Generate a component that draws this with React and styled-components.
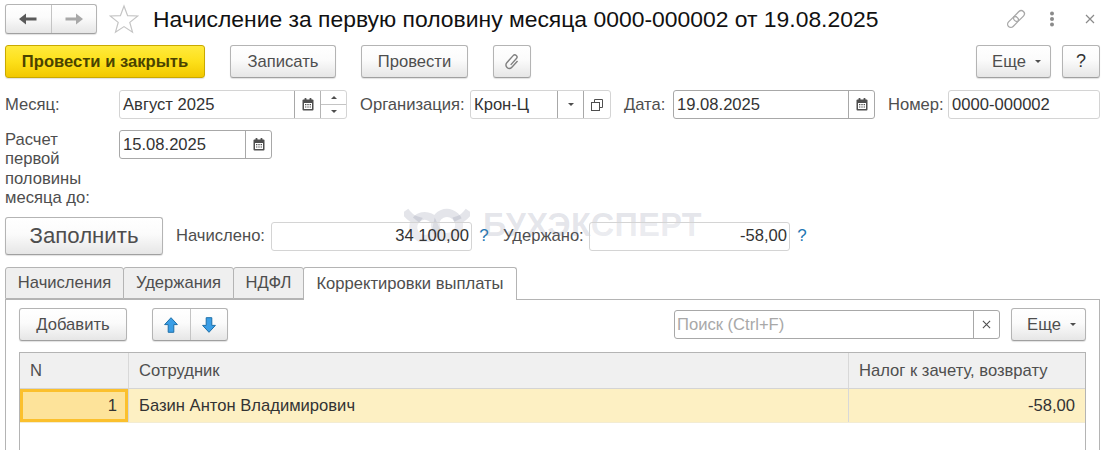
import styled, { createGlobalStyle } from 'styled-components';

const Global = createGlobalStyle`
  html, body { margin: 0; padding: 0; background: #fff; overflow: hidden; }
  body { font-family: "Liberation Sans", Arial, sans-serif; font-size: 16.6px; color: #4e4e4e; }
`;

const Page = styled.div`
  position: relative;
  width: 1109px;
  height: 450px;
  overflow: hidden;
  padding: 4px 9px 0 5px;
  box-sizing: border-box;
`;

const Row = styled.div`
  display: flex;
  align-items: ${({ $align }) => $align || 'center'};
  height: ${({ $h }) => $h}px;
  margin-top: ${({ $mt }) => $mt || 0}px;
`;

const HeadRow = styled(Row)`
  margin-right: -2px;
`;

const Spacer = styled.div`
  flex: 1;
`;

const Btn = styled.button`
  box-sizing: border-box;
  display: flex;
  align-items: center;
  justify-content: center;
  width: ${({ $w }) => $w}px;
  height: ${({ $h }) => $h || 33}px;
  margin-left: ${({ $ml }) => $ml || 0}px;
  padding: 0;
  border: 1px solid #b4b4b4;
  border-bottom-color: #a0a0a0;
  border-radius: 3px;
  background: linear-gradient(#ffffff 0%, #fbfbfb 45%, #e6e6e6 100%);
  box-shadow: 0 1px 1px rgba(0, 0, 0, 0.12);
  font-family: inherit;
  font-size: ${({ $fs }) => $fs || 16.6}px;
  color: #4e4e4e;
`;

const YellowBtn = styled(Btn)`
  border-color: #c9a900;
  background: linear-gradient(#ffea3d 0%, #fde01a 50%, #f2c800 100%);
  font-weight: 700;
  color: #4a4300;
`;

const MoreBtn = styled(Btn)`
  padding-left: 6px;
`;

const HelpBtn = styled(Btn)`
  font-size: 18px;
  color: #333;
`;

const Split = styled.div`
  box-sizing: border-box;
  display: flex;
  width: ${({ $w }) => $w}px;
  height: ${({ $h }) => $h}px;
  margin-left: ${({ $ml }) => $ml || 0}px;
  border: 1px solid #b4b4b4;
  border-bottom-color: #a0a0a0;
  border-radius: 3px;
  background: linear-gradient(#ffffff 0%, #fbfbfb 45%, #e6e6e6 100%);
  box-shadow: 0 1px 1px rgba(0, 0, 0, 0.12);
`;

const SplitCell = styled.div`
  flex: 1;
  display: flex;
  align-items: center;
  justify-content: center;
  & + & { border-left: 1px solid #c4c4c4; }
`;

const Caret = styled.span`
  display: inline-block;
  width: 0;
  height: 0;
  margin-left: ${({ $ml }) => $ml ?? 9}px;
  border-left: 3px solid transparent;
  border-right: 3px solid transparent;
  border-${({ $up }) => ($up ? 'bottom' : 'top')}: 3px solid #4e4e4e;
`;

const Title = styled.h1`
  margin: 0 0 0 13px;
  font-size: 22.9px;
  font-weight: 400;
  color: #111;
  white-space: nowrap;
`;

const HeadIcon = styled.div`
  display: flex;
  align-items: center;
  justify-content: center;
  width: ${({ $w }) => $w || 24}px;
  margin-left: ${({ $ml }) => $ml || 0}px;
`;

const Label = styled.label`
  width: ${({ $w }) => $w}px;
  margin-left: ${({ $ml }) => $ml || 0}px;
  flex-shrink: 0;
  white-space: nowrap;
  color: #4e4e4e;
`;

const Field = styled.div`
  box-sizing: border-box;
  display: flex;
  align-items: stretch;
  width: ${({ $w }) => $w}px;
  height: 29px;
  margin-left: ${({ $ml }) => $ml || 0}px;
  flex-shrink: 0;
  border: 1px solid ${({ $dark }) => ($dark ? '#a8a8a8' : '#d4d4d4')};
  border-radius: 3px;
  background: #fff;
  color: #333;
`;

/* lies over the watermark, which still shows through */
const ClearField = styled(Field)`
  position: relative;
  z-index: 2;
  background: rgba(255, 255, 255, 0.25);
`;

const FieldText = styled.div`
  flex: 1;
  min-width: 0;
  display: flex;
  align-items: center;
  justify-content: ${({ $right }) => ($right ? 'flex-end' : 'flex-start')};
  padding: ${({ $right }) => ($right ? '0 2px 0 0' : '0 0 0 3px')};
  white-space: nowrap;
`;

const Placeholder = styled(FieldText)`
  padding-left: 2px;
  color: #a8a8a8;
`;

const FieldBtn = styled.div`
  box-sizing: border-box;
  display: flex;
  align-items: center;
  justify-content: center;
  width: ${({ $w }) => $w || 26}px;
  border-left: 1px solid #a8a8a8;
`;

const Spin = styled.div`
  box-sizing: border-box;
  display: flex;
  flex-direction: column;
  width: 26px;
  border-left: 1px solid #b4b4b4;
`;

const SpinHalf = styled.div`
  flex: 1;
  display: flex;
  align-items: center;
  justify-content: center;
  & + & { border-top: 1px solid #c4c4c4; }
`;

const MultiLabel = styled.div`
  width: 114px;
  flex-shrink: 0;
  line-height: 19.4px;
  color: #4e4e4e;
`;

const Hint = styled.span`
  width: ${({ $w }) => $w}px;
  text-align: center;
  flex-shrink: 0;
  color: #1f78b4;
  font-size: 17px;
`;

const Tabs = styled.div`
  display: flex;
  height: 33px;
  margin-top: 12px;
`;

const Tab = styled.div`
  box-sizing: border-box;
  display: flex;
  align-items: center;
  justify-content: center;
  width: ${({ $w }) => $w}px;
  height: ${({ $active }) => ($active ? 33 : 32)}px;
  margin-left: ${({ $first }) => ($first ? 0 : -1)}px;
  border: 1px solid #b4b4b4;
  border-bottom: ${({ $active }) => ($active ? 'none' : '1px solid #b4b4b4')};
  border-radius: 3px 3px 0 0;
  background: ${({ $active }) => ($active ? '#fff' : '#efefef')};
  color: #4e4e4e;
  position: relative;
  z-index: ${({ $active }) => ($active ? 1 : 0)};
`;

const Panel = styled.div`
  box-sizing: border-box;
  height: 160px;
  margin-top: -1px;
  width: 1095px;
  padding: 8px 13px 0 13px;
  border: 1px solid #b4b4b4;
  border-bottom: none;
`;

const Table = styled.div`
  box-sizing: border-box;
  width: 1067px;
  height: 110px;
  margin-top: 11px;
  border: 1px solid #b4b4b4;
  border-bottom: none;
`;

const GridRow = styled.div`
  display: grid;
  grid-template-columns: 108px 720px 1fr;
  height: ${({ $h }) => $h}px;
  background: ${({ $current }) => ($current ? '#fdf0c3' : '#f0f0f0')};
  border-bottom: 1px solid ${({ $current }) => ($current ? '#f3ecd2' : '#d4d4d4')};
  color: ${({ $current }) => ($current ? '#333' : '#4e4e4e')};
`;

const Cell = styled.div`
  box-sizing: border-box;
  display: flex;
  align-items: center;
  justify-content: ${({ $right }) => ($right ? 'flex-end' : 'flex-start')};
  padding: ${({ $right }) => ($right ? '0 10px 0 0' : '0 0 0 10px')};
  border-left: ${({ $first }) => ($first ? 'none' : '1px solid #d8d8d8')};
  white-space: nowrap;
`;

const ActiveCell = styled(Cell)`
  padding-right: 8px;
  border: 3px solid #fbc02d;
  background: #fde39a;
`;

const Watermark = styled.div`
  position: absolute;
  left: 404px;
  top: 206px;
  z-index: 1;
  display: flex;
  align-items: center;
  height: 38px;
  pointer-events: none;
  color: rgba(120, 124, 150, 0.2);
`;

const WatermarkText = styled.span`
  margin-left: 13px;
  font-size: 32.4px;
  font-weight: 700;
  letter-spacing: 0.4px;
`;

const ArrowLeft = ({ color }) => (
  <svg width="18" height="12" viewBox="0 0 18 12"><path d="M0 6 L7 0.5 V4.5 H17.5 V7.5 H7 V11.5 Z" fill={color} /></svg>
);
const ArrowRight = ({ color }) => (
  <svg width="18" height="12" viewBox="0 0 18 12"><path d="M18 6 L11 0.5 V4.5 H0.5 V7.5 H11 V11.5 Z" fill={color} /></svg>
);
const Star = () => (
  <svg width="30" height="30" viewBox="0 0 30 30"><path d="M15 2 L18.6 11.6 L28.8 12 L20.8 18.4 L23.5 28.2 L15 22.6 L6.5 28.2 L9.2 18.4 L1.2 12 L11.4 11.6 Z" fill="#fff" stroke="#c4c4c4" strokeWidth="1.2" /></svg>
);
const LinkIcon = () => (
  <svg width="22" height="22" viewBox="0 0 22 22" fill="none" stroke="#a8a8a8" strokeWidth="1.3">
    <g transform="rotate(-45 11 11)">
      <rect x="0.5" y="7.8" width="12.5" height="6.4" rx="3.2" />
      <rect x="9" y="7.8" width="12.5" height="6.4" rx="3.2" />
    </g>
  </svg>
);
const Dots = () => (
  <svg width="6" height="16" viewBox="0 0 6 16" fill="#8a8a8a"><circle cx="3" cy="2.5" r="2" /><circle cx="3" cy="8" r="2" /><circle cx="3" cy="13.5" r="2" /></svg>
);
const Cross = ({ size = 10, color = '#8a8a8a' }) => (
  <svg width={size} height={size} viewBox="0 0 10 10" stroke={color} strokeWidth="1.2"><path d="M1 1 L9 9 M9 1 L1 9" /></svg>
);
const Clip = () => (
  <svg width="20" height="20" viewBox="0 0 20 20" fill="none" stroke="#808080" strokeWidth="1.4">
    <path transform="rotate(42 10 10)" d="M13.4 5.5 V14 a3.4 3.4 0 0 1-6.8 0 V4.5 a2.2 2.2 0 0 1 4.4 0 V13" />
  </svg>
);
const Calendar = () => (
  <svg width="12" height="13" viewBox="0 0 12 13"><rect x="0.5" y="1.5" width="11" height="11" rx="1" fill="#4e4e4e" /><rect x="2.5" y="0" width="2" height="3" rx="0.8" fill="#4e4e4e" /><rect x="7.5" y="0" width="2" height="3" rx="0.8" fill="#4e4e4e" /><path d="M2 5 H10 V11 H2 Z" fill="#fff" /><path d="M3 6 h1.4 v1.2 h-1.4z M5.3 6 h1.4 v1.2 h-1.4z M7.6 6 h1.4 v1.2 h-1.4z M3 8.4 h1.4 v1.2 h-1.4z M5.3 8.4 h1.4 v1.2 h-1.4z M7.6 8.4 h1.4 v1.2 h-1.4z" fill="#4e4e4e" /></svg>
);
const OpenIcon = () => (
  <svg width="12" height="12" viewBox="0 0 12 12" fill="none" stroke="#4e4e4e"><path d="M3.5 3.5 V0.5 H11.5 V8.5 H8.5" /><rect x="0.5" y="3.5" width="8" height="8" fill="#fff" /></svg>
);
const BlueArrow = ({ down }) => (
  <svg width="14" height="16" viewBox="0 0 14 16" style={{ transform: down ? 'rotate(180deg)' : 'none' }}><path d="M7 0.7 L13.4 7.6 H9.8 V15.3 H4.2 V7.6 H0.6 Z" fill="#3a9ee6" stroke="#1d6fa8" strokeWidth="1" /></svg>
);
const OwlLogo = () => (
  <svg width="66" height="34" viewBox="0 0 66 34" fill="none" stroke="rgba(120,124,150,0.2)" strokeWidth="8">
    <path d="M1 3 Q6 10 12 12 A11.5 11.5 0 1 0 32 22 A11.5 11.5 0 1 0 54 12 Q60 10 65 3" />
    <path d="M12 12 A11.5 11.5 0 0 1 32 22 A11.5 11.5 0 0 1 54 12" />
  </svg>
);

export default function App() {
  return (
    <Page>
      <Global />
      <HeadRow $h={30}>
        <Split $w={92} $h={30}>
          <SplitCell><ArrowLeft color="#5a5a5a" /></SplitCell>
          <SplitCell><ArrowRight color="#a8a8a8" /></SplitCell>
        </Split>
        <HeadIcon $ml={11} $w={32}><Star /></HeadIcon>
        <Title>Начисление за первую половину месяца 0000-000002 от 19.08.2025</Title>
        <Spacer />
        <HeadIcon><LinkIcon /></HeadIcon>
        <HeadIcon $ml={12}><Dots /></HeadIcon>
        <HeadIcon $ml={14}><Cross /></HeadIcon>
      </HeadRow>

      <Row $h={33} $mt={11}>
        <YellowBtn $w={200}>Провести и закрыть</YellowBtn>
        <Btn $w={106} $ml={25}>Записать</Btn>
        <Btn $w={107} $ml={25}>Провести</Btn>
        <Btn $w={38} $ml={25}><Clip /></Btn>
        <Spacer />
        <MoreBtn $w={75}>Еще<Caret /></MoreBtn>
        <HelpBtn $w={38} $ml={11}>?</HelpBtn>
      </Row>

      <Row $h={29} $mt={12}>
        <Label $w={114}>Месяц:</Label>
        <Field $w={228}>
          <FieldText>Август 2025</FieldText>
          <FieldBtn><Calendar /></FieldBtn>
          <Spin>
            <SpinHalf><Caret $up $ml={0} /></SpinHalf>
            <SpinHalf><Caret $ml={0} /></SpinHalf>
          </Spin>
        </Field>
        <Label $w={110} $ml={13}>Организация:</Label>
        <Field $w={141}>
          <FieldText>Крон-Ц</FieldText>
          <FieldBtn><Caret $ml={0} /></FieldBtn>
          <FieldBtn $w={27}><OpenIcon /></FieldBtn>
        </Field>
        <Label $w={49} $ml={13}>Дата:</Label>
        <Field $w={202} $dark>
          <FieldText>19.08.2025</FieldText>
          <FieldBtn><Calendar /></FieldBtn>
        </Field>
        <Label $w={60} $ml={13}>Номер:</Label>
        <Field $w={152}>
          <FieldText>0000-000002</FieldText>
        </Field>
      </Row>

      <Row $h={77} $mt={11} $align="flex-start">
        <MultiLabel>Расчет<br />первой<br />половины<br />месяца до:</MultiLabel>
        <Field $w={153} $dark>
          <FieldText>15.08.2025</FieldText>
          <FieldBtn><Calendar /></FieldBtn>
        </Field>
      </Row>

      <Row $h={38} $mt={10}>
        <Btn $w={158} $h={38} $fs={22.2}>Заполнить</Btn>
        <Label $w={95} $ml={13}>Начислено:</Label>
        <ClearField $w={201}><FieldText $right>34 100,00</FieldText></ClearField>
        <Hint $w={24}>?</Hint>
        <Label $w={86} $ml={7}>Удержано:</Label>
        <ClearField $w={201}><FieldText $right>-58,00</FieldText></ClearField>
        <Hint $w={24}>?</Hint>
      </Row>

      <Tabs>
        <Tab $first $w={119}>Начисления</Tab>
        <Tab $w={111}>Удержания</Tab>
        <Tab $w={71}>НДФЛ</Tab>
        <Tab $active $w={214}>Корректировки выплаты</Tab>
      </Tabs>

      <Panel>
        <Row $h={33}>
          <Btn $w={108}>Добавить</Btn>
          <Split $w={76} $h={33} $ml={25}>
            <SplitCell><BlueArrow /></SplitCell>
            <SplitCell><BlueArrow down /></SplitCell>
          </Split>
          <Spacer />
          <Field $w={326} $dark>
            <Placeholder>Поиск (Ctrl+F)</Placeholder>
            <FieldBtn><Cross size={9} color="#4e4e4e" /></FieldBtn>
          </Field>
          <MoreBtn $w={75} $ml={11}>Еще<Caret /></MoreBtn>
        </Row>
        <Table>
          <GridRow $h={35}>
            <Cell $first>N</Cell>
            <Cell>Сотрудник</Cell>
            <Cell>Налог к зачету, возврату</Cell>
          </GridRow>
          <GridRow $h={33} $current>
            <ActiveCell $first $right>1</ActiveCell>
            <Cell>Базин Антон Владимирович</Cell>
            <Cell $right>-58,00</Cell>
          </GridRow>
        </Table>
      </Panel>

      <Watermark>
        <OwlLogo />
        <WatermarkText>БУХЭКСПЕРТ</WatermarkText>
      </Watermark>
    </Page>
  );
}
